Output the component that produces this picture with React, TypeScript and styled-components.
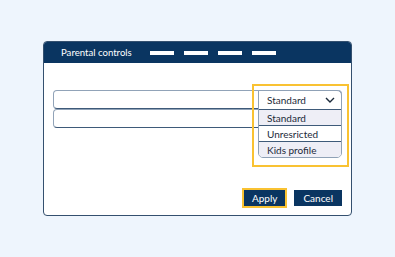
import styled, { createGlobalStyle } from "styled-components";

const GlobalStyle = createGlobalStyle`
  html, body {
    margin: 0;
    padding: 0;
    background: #eef5fd;
    font-family: Lato, "Liberation Sans", sans-serif;
  }
`;

const Page = styled.div`
  width: 395px;
  height: 257px;
  display: flex;
  align-items: center;
  justify-content: center;
`;

const Window = styled.div`
  width: 309px;
  height: 175px;
  box-sizing: border-box;
  background: #ffffff;
  border: 1px solid #34506f;
  border-radius: 4px;
  display: flex;
  flex-direction: column;
  overflow: hidden;
`;

const TitleBar = styled.div`
  height: 21px;
  flex: 0 0 auto;
  background: #0a3561;
  display: flex;
  align-items: center;
  padding-left: 17px;
  gap: 10px;
`;

const Title = styled.span`
  color: #ffffff;
  font-size: 9.6px;
  width: 79px;
  margin-right: 0;
`;

const Tab = styled.span`
  width: 24px;
  height: 4px;
  background: #ffffff;
`;

const Body = styled.div`
  flex: 1;
  padding: 27px 9px 9px 9px;
  display: flex;
  flex-direction: column;
`;

const Rows = styled.div`
  position: relative;
  display: flex;
  flex-direction: column;
`;

const Row = styled.div`
  height: 19px;
  box-sizing: border-box;
  border: 1px solid #91a3b8;
  border-bottom-color: #3e5a79;
  border-radius: 4px;
`;

const Focus = styled.div`
  position: absolute;
  top: -6px;
  right: -7px;
  padding: 4px 5px 7px 4px;
  border: 2px solid #f9c232;
`;

const Menu = styled.div`
  width: 82px;
  background: #ffffff;
  border: 1px solid #8fa1b6;
  border-radius: 0 5px 5px 5px;
  overflow: hidden;
  font-size: 10px;
  color: #1c2a3a;
`;

const MenuHead = styled.div`
  height: 18px;
  display: flex;
  align-items: center;
  justify-content: space-between;
  padding: 0 6px 0 8px;
  border-bottom: 1px solid #3e5a79;
`;

const Option = styled.div<{ $shade?: boolean }>`
  height: 15px;
  display: flex;
  align-items: center;
  padding-left: 8px;
  background: ${(p) => (p.$shade ? "#eeeef6" : "#ffffff")};
  & + & {
    border-top: 1px solid #3e5a79;
  }
`;

const Footer = styled.div`
  margin-top: auto;
  display: flex;
  justify-content: flex-end;
  align-items: center;
  gap: 7px;
`;

const Button = styled.button<{ $focused?: boolean }>`
  font-family: Lato, "Liberation Sans", sans-serif;
  font-size: 10px;
  color: #ffffff;
  background: #0a3561;
  border: none;
  margin: 0;
  height: 16px;
  padding: 0 ${(p) => (p.$focused ? "8px" : "9px")};
  line-height: 16px;
  box-shadow: ${(p) => (p.$focused ? "0 0 0 2px #f9c232" : "none")};
  margin-right: ${(p) => (p.$focused ? "2px" : "0")};
`;

const Chevron = () => (
  <svg width="10" height="6" viewBox="0 0 10 6">
    <path d="M1 1l4 4 4-4" fill="none" stroke="#1c2a3a" strokeWidth="1.4" />
  </svg>
);

export default function App() {
  return (
    <Page>
      <GlobalStyle />
      <Window>
        <TitleBar>
          <Title>Parental controls</Title>
          <Tab />
          <Tab />
          <Tab />
          <Tab />
        </TitleBar>
        <Body>
          <Rows>
            <Row />
            <Row />
            <Focus>
              <Menu>
                <MenuHead>
                  <span>Standard</span>
                  <Chevron />
                </MenuHead>
                <Option $shade>Standard</Option>
                <Option>Unresricted</Option>
                <Option $shade>Kids profile</Option>
              </Menu>
            </Focus>
          </Rows>
          <Footer>
            <Button $focused>Apply</Button>
            <Button>Cancel</Button>
          </Footer>
        </Body>
      </Window>
    </Page>
  );
}
